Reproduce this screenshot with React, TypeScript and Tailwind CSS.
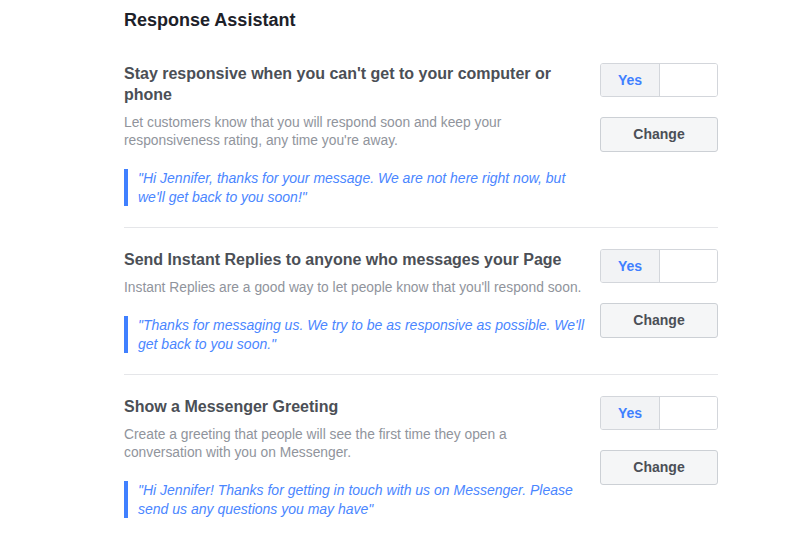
const sections = [
  {
    title: "Stay responsive when you can't get to your computer or phone",
    desc: "Let customers know that you will respond soon and keep your responsiveness rating, any time you're away.",
    quote: '"Hi Jennifer, thanks for your message. We are not here right now, but we\'ll get back to you soon!"',
  },
  {
    title: "Send Instant Replies to anyone who messages your Page",
    desc: "Instant Replies are a good way to let people know that you'll respond soon.",
    quote: '"Thanks for messaging us. We try to be as responsive as possible. We\'ll get back to you soon."',
  },
  {
    title: "Show a Messenger Greeting",
    desc: "Create a greeting that people will see the first time they open a conversation with you on Messenger.",
    quote: '"Hi Jennifer! Thanks for getting in touch with us on Messenger. Please send us any questions you may have"',
  },
];

function Toggle() {
  return (
    <div className="flex h-[34px] w-[118px] overflow-hidden rounded-[3px] border border-[#d3d6db]">
      <div className="flex w-[59px] items-center justify-center border-r border-[#d3d6db] bg-[#f2f3f5] text-[14px] font-bold text-[#4080ff]">
        Yes
      </div>
      <div className="flex-1 bg-white" />
    </div>
  );
}

export default function App() {
  return (
    <div className="min-h-[533px] bg-white font-['Liberation_Sans',Arial,sans-serif]">
      <div className="ml-[124px] w-[594px] pt-[9px]">
        <h1 className="text-[18px] font-bold leading-[22px] text-[#1d2129]">Response Assistant</h1>
        <div className="mt-[11px]">
          {sections.map((s, i) => (
            <div
              key={i}
              className={`flex gap-[10px] pt-[21px] pb-[21px] ${i < sections.length - 1 ? "border-b border-[#e5e6e9]" : ""}`}
            >
              <div className="w-[466px]">
                <h2 className="text-[16px] font-bold leading-[21px] text-[#4b4f56]">{s.title}</h2>
                <p className="mt-[9px] max-w-[460px] text-[13.8px] leading-[18px] text-[#90949c]">{s.desc}</p>
                <blockquote className="mt-[19px] border-l-[4px] border-[#4080ff] pl-[10px] text-[14px] italic leading-[18.5px] text-[#4a86ff]">
                  {s.quote}
                </blockquote>
              </div>
              <div className="ml-auto flex w-[118px] flex-col gap-[20px]">
                <Toggle />
                <button className="h-[35px] w-[118px] rounded-[3px] border border-[#ccd0d5] bg-[#f5f6f7] text-[14px] font-bold text-[#4b4f56]">
                  Change
                </button>
              </div>
            </div>
          ))}
        </div>
      </div>
    </div>
  );
}
